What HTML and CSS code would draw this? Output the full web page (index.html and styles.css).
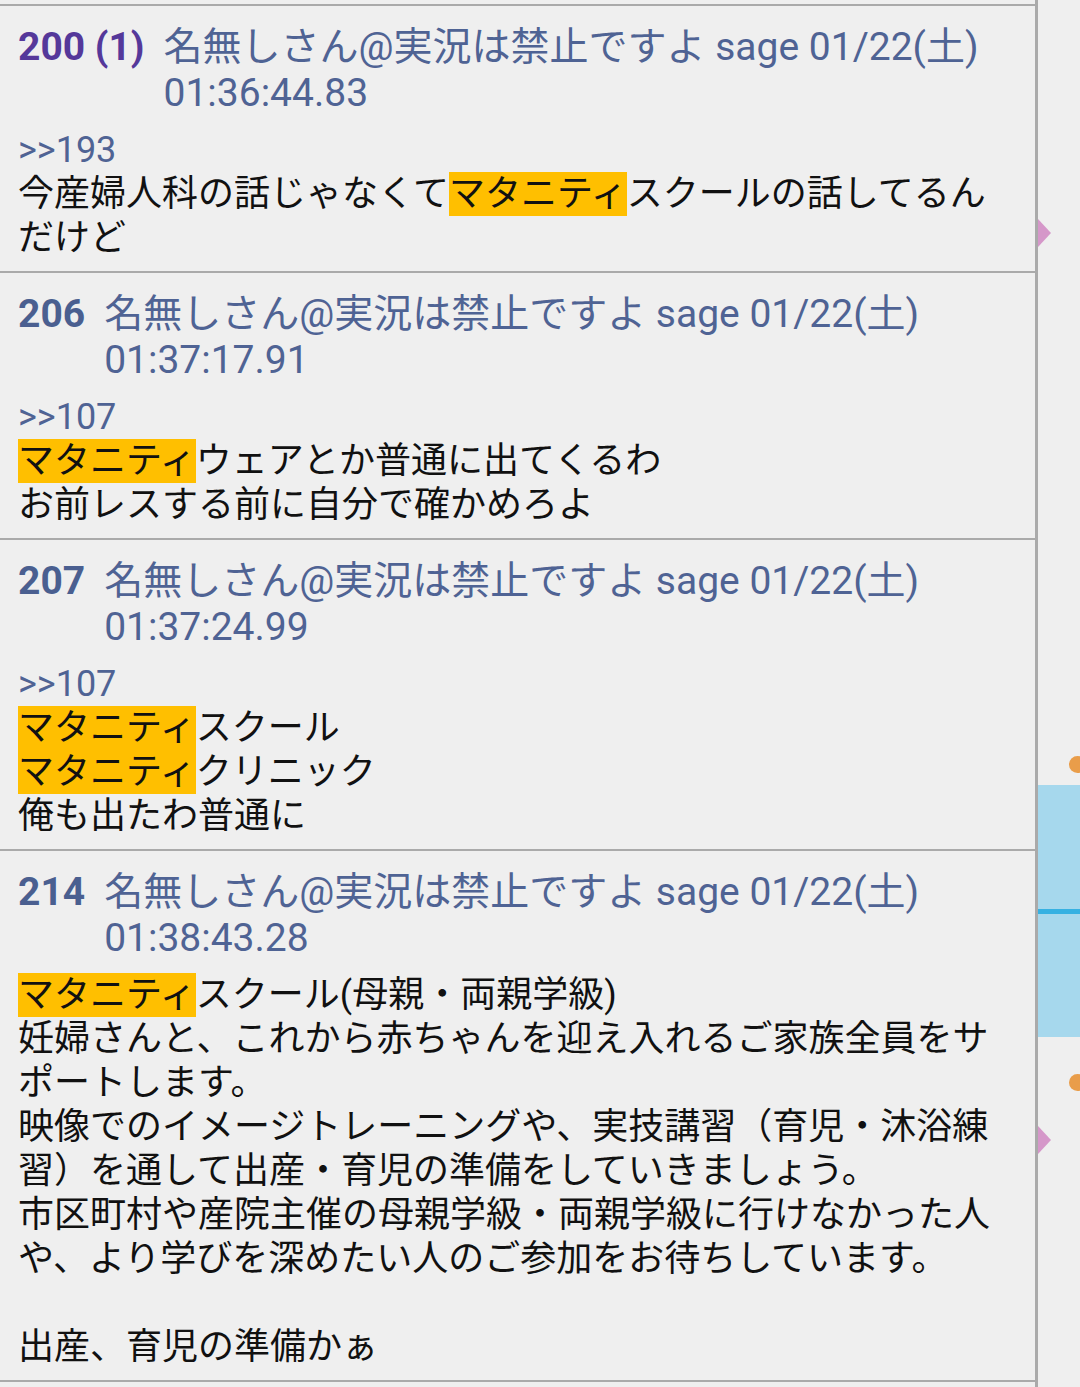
FILE: index.html
```html
<!DOCTYPE html>
<html lang="ja">
<head>
  <meta charset="UTF-8" />
  <title>スレッド</title>
  <link rel="stylesheet" href="styles.css">
</head>
<body>
  <div class="thread">

    <div class="res">
      <div class="res-head">
        <span class="num replied">200 (1)</span>
        <span class="info">名無しさん@実況は禁止ですよ sage 01/22(土) 01:36:44.83</span>
      </div>
      <div class="res-body">
        <span class="anchor">&gt;&gt;193</span><br>
        今産婦人科の話じゃなくて<span class="hit">マタニティ</span>スクールの話してるん<br>
        だけど
      </div>
    </div>

    <div class="res">
      <div class="res-head">
        <span class="num">206</span>
        <span class="info">名無しさん@実況は禁止ですよ sage 01/22(土) 01:37:17.91</span>
      </div>
      <div class="res-body">
        <span class="anchor">&gt;&gt;107</span><br>
        <span class="hit">マタニティ</span>ウェアとか普通に出てくるわ<br>
        お前レスする前に自分で確かめろよ
      </div>
    </div>

    <div class="res">
      <div class="res-head">
        <span class="num">207</span>
        <span class="info">名無しさん@実況は禁止ですよ sage 01/22(土) 01:37:24.99</span>
      </div>
      <div class="res-body">
        <span class="anchor">&gt;&gt;107</span><br>
        <span class="hit">マタニティ</span>スクール<br>
        <span class="hit">マタニティ</span>クリニック<br>
        俺も出たわ普通に
      </div>
    </div>

    <div class="res">
      <div class="res-head">
        <span class="num">214</span>
        <span class="info">名無しさん@実況は禁止ですよ sage 01/22(土) 01:38:43.28</span>
      </div>
      <div class="res-body">
        <span class="hit">マタニティ</span>スクール(母親・両親学級)<br>
        妊婦さんと、これから赤ちゃんを迎え入れるご家族全員をサポートします。<br>
        映像でのイメージトレーニングや、実技講習（育児・沐浴練習）を通して出産・育児の準備をしていきましょう。<br>
        市区町村や産院主催の母親学級・両親学級に行けなかった人や、より学びを深めたい人のご参加をお待ちしています。<br>
        <br>
        出産、育児の準備かぁ
      </div>
    </div>

  </div>

  <!-- スクロールバーのマーカー -->
  <div class="scrollbar">
    <svg class="mark-tri" style="top: 219px;" width="13" height="28" viewBox="0 0 13 28">
      <polygon points="0,0 13,14 0,28" fill="#d597c9" />
    </svg>
    <span class="mark-dot" style="top: 756px;"></span>
    <div class="mark-view" style="top: 785px; height: 252px;">
      <span class="mark-line" style="top: 124px;"></span>
    </div>
    <span class="mark-dot" style="top: 1074px;"></span>
    <svg class="mark-tri" style="top: 1126px;" width="13" height="28" viewBox="0 0 13 28">
      <polygon points="0,0 13,14 0,28" fill="#d597c9" />
    </svg>
  </div>
</body>
</html>
```

FILE: styles.css
```css
html, body {
  margin: 0;
  height: 100%;
  overflow: hidden;
}

body {
  background: #efefef;
  font-family: Roboto, "Noto Sans CJK JP", sans-serif;
  display: flex;
}

.thread {
  width: 1035px;
  flex-shrink: 0;
  padding-top: 4px;
  border-right: 3px solid #aaa;
}

.res {
  border-bottom: 2px solid #aaa;
  padding: 18px 18px 11px 18px;
}

.res:first-child {
  border-top: 2px solid #aaa;
}

.res-head {
  display: flex;
  gap: 19px;
  font-size: 39px;
  line-height: 46px;
  color: #4f6394;
}

.num {
  font-weight: bold;
  white-space: nowrap;
  color: #4a5f90;
}

.num.replied {
  color: #55389a;
}

.info {
  flex: 1;
}

.res-body {
  margin-top: 12px;
  font-size: 36px;
  line-height: 44px;
  color: #111;
}

.anchor {
  color: #4f6394;
}

.hit {
  background: #ffbf00;
  padding: 1px 0;
}

.scrollbar {
  flex: 1;
  position: relative;
  overflow: hidden;
}

.mark-tri {
  position: absolute;
  left: 0;
  display: block;
}

.mark-dot {
  position: absolute;
  left: 31px;
  width: 17px;
  height: 17px;
  border-radius: 50%;
  background: #e99d4a;
}

.mark-view {
  position: absolute;
  left: 0;
  right: 0;
  background: #a6d8ed;
}

.mark-line {
  position: absolute;
  left: 0;
  right: 0;
  height: 5px;
  background: #36b1e2;
}
```
